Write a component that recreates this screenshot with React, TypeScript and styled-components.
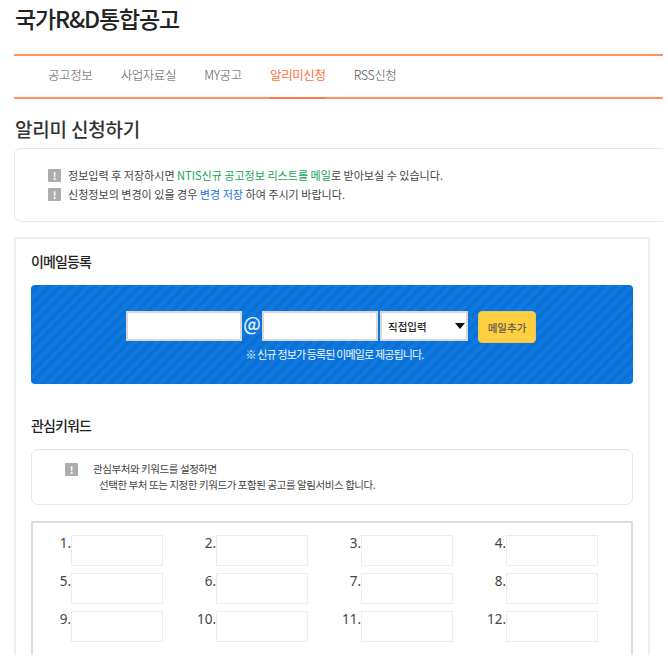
import React from 'react'
import styled, { createGlobalStyle } from 'styled-components'

const GlobalStyle = createGlobalStyle`
  html, body {
    margin: 0;
    padding: 0;
    background: #fff;
    overflow: hidden;
  }
  body {
    font-family: 'Noto Sans CJK KR', 'Noto Sans', sans-serif;
    color: #333;
  }
`

const Frame = styled.div`
  width: 663px;
  height: 655px;
  overflow: hidden;
  padding-left: 14px;
  box-sizing: border-box;
`

const PageTitle = styled.h1`
  margin: 0;
  height: 54px;
  padding: 2px 0 0 1px;
  box-sizing: border-box;
  font-size: 23px;
  line-height: 32px;
  font-weight: 500;
  letter-spacing: -1.15px;
  color: #222;
`

const Tabs = styled.nav`
  display: flex;
  height: 45px;
  box-sizing: border-box;
  padding-left: 34px;
  gap: 28.3px;
  border-top: 2px solid #ff9457;
  border-bottom: 2px solid #ff9457;
`

const Tab = styled.a<{ $active?: boolean }>`
  display: block;
  height: 43px;
  box-sizing: border-box;
  padding-top: 9px;
  font-size: 12.5px;
  line-height: 20px;
  letter-spacing: -0.42px;
  font-weight: ${(p) => (p.$active ? 400 : 300)};
  color: ${(p) => (p.$active ? '#ff6f3c' : '#555')};
  border-bottom: ${(p) => (p.$active ? '2px solid #ff7a45' : 'none')};
`

const SectionTitle = styled.h2`
  margin: 16px 0 0 1px;
  height: 33px;
  font-size: 19px;
  line-height: 28px;
  font-weight: 500;
  letter-spacing: -0.2px;
  color: #333;
`

const NoticeBox = styled.div`
  width: 680px;
  height: 74px;
  box-sizing: border-box;
  border: 1px solid #e6e6e6;
  border-radius: 7px;
  padding: 17px 0 0 33px;
  display: flex;
  flex-direction: column;
  gap: 1px;
`

const NoticeLine = styled.p`
  margin: 0;
  display: flex;
  align-items: center;
  gap: 7px;
  height: 18px;
  font-size: 11.05px;
  line-height: 18px;
  color: #444;
  white-space: pre;
`

const InfoIcon = styled.span`
  flex: none;
  width: 13px;
  height: 13px;
  border-radius: 1px;
  background: #adadad;
  color: #fff;
  font-size: 10px;
  line-height: 13px;
  font-weight: 700;
  text-align: center;
`

const Green = styled.span`
  color: #10a654;
`

const Blue = styled.span`
  color: #1a73d8;
`

const Panel = styled.section`
  width: 636px;
  margin-top: 15px;
  box-sizing: border-box;
  border: 2px solid #eee;
  border-bottom: none;
  padding: 0 15px;
`

const PanelHeading = styled.h3<{ $top: number }>`
  margin: ${(p) => p.$top}px 0 0 0;
  height: 24px;
  font-size: 14px;
  line-height: 24px;
  font-weight: 500;
  letter-spacing: -0.9px;
  color: #222;
`

const EmailBand = styled.div`
  margin-top: 12px;
  height: 99px;
  box-sizing: border-box;
  border-radius: 4px;
  padding-top: 26px;
  background: repeating-linear-gradient(
    -45deg,
    #0b71da 0 4px,
    #1079de 4px 8px
  );
`

const EmailRow = styled.div`
  display: flex;
  justify-content: center;
  align-items: flex-start;
  padding-right: 2px;
`

const EmailInput = styled.input`
  width: 116px;
  height: 30px;
  box-sizing: border-box;
  border: 2px solid #d8d8d8;
  background: #fff;
  padding: 0;
`

const AtSign = styled.span`
  width: 20px;
  height: 26px;
  text-align: center;
  font-size: 18px;
  line-height: 24px;
  font-weight: 500;
  color: #e8f2fc;
`

const SelectWrap = styled.div`
  position: relative;
  margin-left: 2px;
  &::after {
    content: '';
    position: absolute;
    right: 3px;
    top: 12px;
    border-left: 5px solid transparent;
    border-right: 5px solid transparent;
    border-top: 6px solid #111;
  }
`

const DomainSelect = styled.select`
  display: block;
  width: 88px;
  height: 30px;
  box-sizing: border-box;
  border: 2px solid #d8d8d8;
  background: #fff;
  appearance: none;
  border-radius: 0;
  padding: 0 0 0 6px;
  font-family: inherit;
  font-size: 10.5px;
  font-weight: 500;
  color: #222;
`

const AddButton = styled.button`
  width: 58px;
  height: 32px;
  margin-left: 10px;
  box-sizing: border-box;
  border: 1px solid #e7c65a;
  border-radius: 4px;
  background: #ffcf40;
  padding: 0;
  font-family: inherit;
  font-size: 10.5px;
  font-weight: 500;
  color: #5d5d52;
`

const BandNote = styled.p`
  margin: 2px 0 0 0;
  text-align: center;
  font-size: 11px;
  line-height: 18px;
  letter-spacing: -0.85px;
  color: #f2f7fd;
  padding-left: 5px;
`

const KeywordNotice = styled.div`
  margin-top: 12px;
  height: 56px;
  box-sizing: border-box;
  border: 1px solid #e6e6e6;
  border-radius: 7px;
  padding: 13px 0 0 33px;
  display: flex;
  gap: 15px;
`

const KeywordText = styled.div`
  margin-top: -2px;
  font-size: 10.5px;
  line-height: 16px;
  letter-spacing: -0.43px;
  color: #444;
`

const KeywordSecond = styled.div`
  padding-left: 6px;
`

const KeywordBox = styled.div`
  margin-top: 16px;
  height: 140px;
  box-sizing: border-box;
  border: 2px solid #ddd;
  padding: 12px 0 0 0;
  display: grid;
  grid-template-columns: repeat(4, 145px);
  grid-auto-rows: 31px;
  row-gap: 7px;
`

const KeywordCell = styled.label`
  display: flex;
  justify-content: flex-end;
  align-items: flex-start;
  width: 130px;
`

const KeywordNumber = styled.span`
  margin-top: -1px;
  font-family: 'Noto Sans', sans-serif;
  font-size: 13.5px;
  line-height: 18px;
  color: #444;
`

const KeywordInput = styled.input`
  width: 92px;
  height: 31px;
  box-sizing: border-box;
  border: 1px solid #ececec;
  background: #fff;
  padding: 0;
`

const keywordNumbers = [1, 2, 3, 4, 5, 6, 7, 8, 9, 10, 11, 12]

const App: React.FC = () => {
  return (
    <Frame>
      <GlobalStyle />
      <PageTitle>국가R&amp;D통합공고</PageTitle>
      <Tabs>
        <Tab>공고정보</Tab>
        <Tab>사업자료실</Tab>
        <Tab>MY공고</Tab>
        <Tab $active>알리미신청</Tab>
        <Tab>RSS신청</Tab>
      </Tabs>
      <SectionTitle>알리미 신청하기</SectionTitle>
      <NoticeBox>
        <NoticeLine>
          <InfoIcon>!</InfoIcon>
          <span>
            정보입력 후 저장하시면 <Green>NTIS신규 공고정보 리스트를 메일</Green>로 받아보실 수 있습니다.
          </span>
        </NoticeLine>
        <NoticeLine>
          <InfoIcon>!</InfoIcon>
          <span>
            신청정보의 변경이 있을 경우 <Blue>변경 저장</Blue> 하여 주시기 바랍니다.
          </span>
        </NoticeLine>
      </NoticeBox>
      <Panel>
        <PanelHeading $top={10}>이메일등록</PanelHeading>
        <EmailBand>
          <EmailRow>
            <EmailInput type="text" />
            <AtSign>@</AtSign>
            <EmailInput type="text" />
            <SelectWrap>
              <DomainSelect defaultValue="direct">
                <option value="direct">직접입력</option>
              </DomainSelect>
            </SelectWrap>
            <AddButton type="button">메일추가</AddButton>
          </EmailRow>
          <BandNote>※ 신규 정보가 등록된 이메일로 제공됩니다.</BandNote>
        </EmailBand>
        <PanelHeading $top={29}>관심키워드</PanelHeading>
        <KeywordNotice>
          <InfoIcon>!</InfoIcon>
          <KeywordText>
            <div>관심부처와 키워드를 설정하면</div>
            <KeywordSecond>선택한 부처 또는 지정한 키워드가 포함된 공고를 알림서비스 합니다.</KeywordSecond>
          </KeywordText>
        </KeywordNotice>
        <KeywordBox>
          {keywordNumbers.map((n) => (
            <KeywordCell key={n}>
              <KeywordNumber>{n}.</KeywordNumber>
              <KeywordInput type="text" />
            </KeywordCell>
          ))}
        </KeywordBox>
      </Panel>
    </Frame>
  )
}

export default App
